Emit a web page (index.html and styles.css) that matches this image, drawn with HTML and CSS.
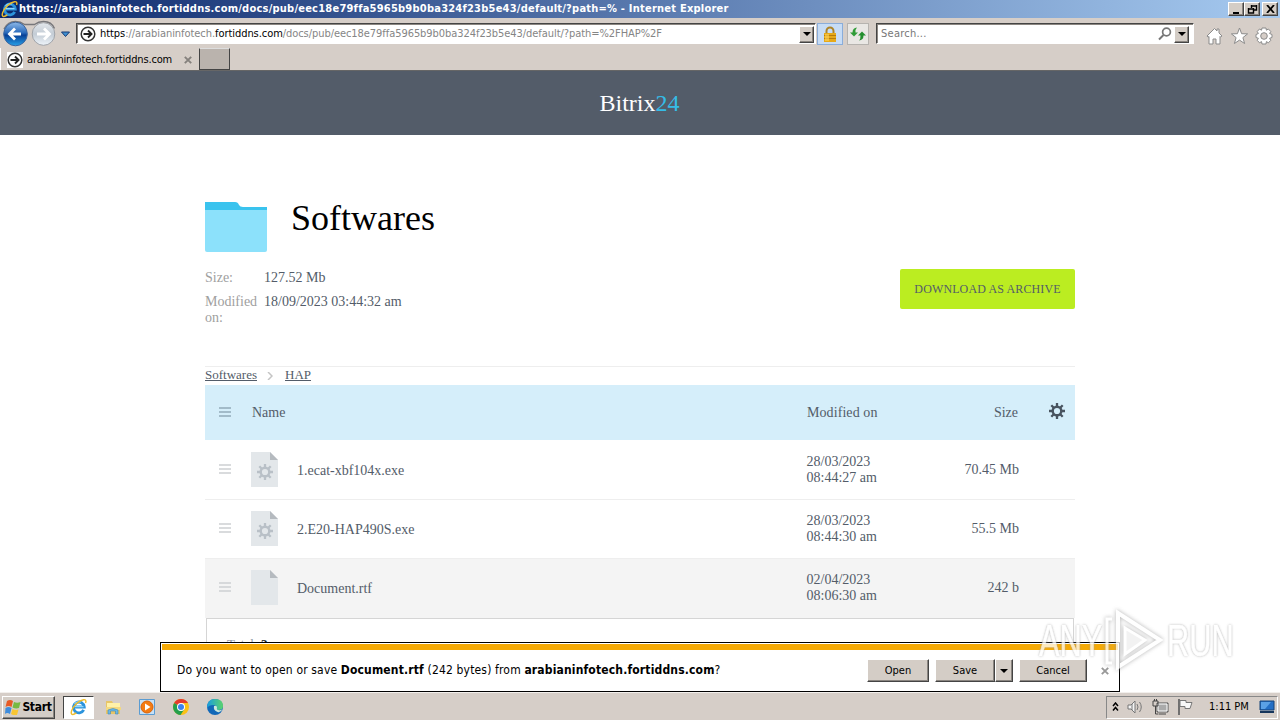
FILE: index.html
```html
<!DOCTYPE html>
<html lang="en">
<head>
<meta charset="utf-8">
<title>Bitrix24 - Internet Explorer</title>
<link rel="stylesheet" href="styles.css">
</head>
<body>
<svg class="defs" width="0" height="0">
  <defs>
    <symbol id="ie" viewBox="0 0 20 20">
      <path d="M15.2 13.2A6 6 0 1 1 15.8 10H5" fill="none" stroke="#2b93dc" stroke-width="3.2"/>
      <path d="M5 9.6h10M5 6.500a6 6 0 0 1 7-1.800" fill="none" stroke="#8fd7fb" stroke-width="1.200"/>
      <path d="M17.300 5.500C19.500 0 12.500 1 7 6.500C2 11.500-.5 18 3 18.300c1.500.1 3-1 4-1.800" fill="none" stroke="#eebc2d" stroke-width="1.600"/>
    </symbol>
    <symbol id="go" viewBox="0 0 16 16">
      <rect width="16" height="16" fill="#fff"/>
      <circle cx="8" cy="8" r="6.800" fill="none" stroke="#333" stroke-width="1.500"/>
      <path d="M3.500 8h8M8 4.500L11.500 8 8 11.500" fill="none" stroke="#222" stroke-width="1.900"/>
    </symbol>
    <symbol id="gear" viewBox="0 0 16 16">
      <circle cx="8" cy="8" r="4.300" fill="none" stroke="currentColor" stroke-width="2.400"/>
      <path d="M8 0v3M8 13v3M0 8h3M13 8h3M2.300 2.300l2.200 2.200M11.500 11.500l2.200 2.200M2.300 13.700l2.200-2.200M11.500 4.500l2.200-2.200" stroke="currentColor" stroke-width="2.300"/>
    </symbol>
    <symbol id="file" viewBox="0 0 27 35">
      <path d="M0 0h19l8 8v27H0z" fill="#e3e7ea"/>
      <path d="M19 0l8 8h-8z" fill="#b5babf"/>
    </symbol>
    <symbol id="bars" viewBox="0 0 12 10">
      <path d="M0 1h12M0 5h12M0 9h12" stroke="currentColor" stroke-width="1.500"/>
    </symbol>
    <symbol id="down" viewBox="0 0 8 4"><path d="M0 0h8L4 4z" fill="#000"/></symbol>
    <symbol id="close" viewBox="0 0 8 8"><path d="M.8.8l6.400 6.400M7.200.8L.8 7.200" stroke="currentColor" stroke-width="1.900"/></symbol>
  </defs>
</svg>
<div class="screen">
  <div class="titlebar">
    <svg class="title-icon"><use href="#ie"/></svg>
    <span class="title-text">https://arabianinfotech.fortiddns.com/docs/pub/eec18e79ffa5965b9b0ba324f23b5e43/default/?path=% - Internet Explorer</span>
    <div class="win-buttons">
      <span class="btn win"><svg width="11" height="9"><path d="M2 8h6" stroke="#000" stroke-width="2"/></svg></span>
      <span class="btn win"><svg width="11" height="10"><path d="M4 2h6M9.500 1v5H7M4.500 1v3M1 5h6M1.500 4v5h5V4" fill="none" stroke="#000" stroke-width="1.400"/></svg></span>
      <span class="btn win gap"><svg width="9" height="8"><path d="M1 0l7 8M8 0L1 8" stroke="#000" stroke-width="1.800"/></svg></span>
    </div>
  </div>
  <div class="toolbar">
    <svg class="nav" viewBox="0 0 74 28">
      <defs>
        <linearGradient id="blue" x2="0" y2="1"><stop offset="0" stop-color="#8eb9e8"/><stop offset=".45" stop-color="#2869bb"/><stop offset=".55" stop-color="#073f96"/><stop offset="1" stop-color="#29a2e9"/></linearGradient>
        <linearGradient id="pale" x2="0" y2="1"><stop offset="0" stop-color="#e4e8ec"/><stop offset=".5" stop-color="#c3ccd5"/><stop offset="1" stop-color="#eef4fa"/></linearGradient>
      </defs>
      <path d="M4 9Q8 1.500 15.500 1.500q5 0 9 3h10q4-3 9-3 8 0 11 7" fill="none" stroke="#77777b" stroke-width="1.500"/>
      <circle cx="15.500" cy="14" r="11.800" fill="url(#blue)" stroke="#39649f"/>
      <path d="M21 14H11M15 8.500L9.500 14l5.500 5.500" fill="none" stroke="#fff" stroke-width="2.800"/>
      <circle cx="43.500" cy="14" r="11.300" fill="url(#pale)" stroke="#a0a4aa"/>
      <path d="M37 14h11M44 8.500l5.500 5.500-5.500 5.500" fill="none" stroke="#fff" stroke-width="2.800"/>
      <path d="M61.500 12h8l-4 4.500z" fill="#3f8fd0" stroke="#183b75"/>
    </svg>
    <div class="field address">
      <svg class="go"><use href="#go"/></svg>
      <span class="url"><b>https</b>://arabianinfotech.<b>fortiddns.com</b>/docs/pub/eec18e79ffa5965b9b0ba324f23b5e43/default/?path=%2FHAP%2F</span>
      <span class="btn drop"><svg width="8" height="4"><use href="#down"/></svg></span>
    </div>
    <div class="lock"><svg width="14" height="16"><path d="M3.500 8V5a3.500 3.500 0 0 1 7 0v3" fill="none" stroke="#ad8429" stroke-width="2"/><path d="M1 7h12v9H1z" fill="#e7a918"/><path d="M1 9.500h12M1 12.500h12" stroke="#b77c0b"/><path d="M2 8h4v7H2z" fill="#ffd65c" opacity=".6"/></svg></div>
    <div class="refresh"><svg width="16" height="14"><path d="M0 5l4-4.500V4h3v2H5.500L8 6 4 10z" fill="none"/><path d="M0 5.500h2.500Q2.500 1 7 .5 5.300 2 5.500 5.500H8L4 9.500z" fill="#2f9c37"/><path d="M8 8.500l4-4 4 4h-2.500Q13.500 13 9 13.500q1.700-1.500 1.500-5z" fill="#248f2f"/></svg></div>
    <div class="field search">
      <span class="placeholder">Search...</span>
      <svg width="14" height="14"><circle cx="8.500" cy="5" r="3.900" fill="none" stroke="#777" stroke-width="1.700"/><path d="M5.500 8L1 12.500" stroke="#777" stroke-width="2"/></svg>
      <span class="btn drop"><svg width="8" height="4"><use href="#down"/></svg></span>
    </div>
    <svg class="commands" viewBox="0 0 68 18">
      <g fill="#fff" stroke="#8b8b8b" stroke-width="1"><path d="M1 9l7.500-7.500L11 4V2h2v4l3 3-1.500 1-.5-.5V17h-4v-5H7v5H3V9.500l-1 .7z"/><path d="M33.500 1l2.100 5.700 6 .2-4.700 3.700 1.700 5.900-5.100-3.400-5.100 3.400 1.700-5.900L25.400 6.900l6-.2z"/>
      <path d="M56 1h4l.4 2.200 2-1.200 2.400 2.500-1.200 2L66 7.500v3l-2.400.8 1.200 2-2.400 2.500-2-1.200L60 17h-4l-.5-2.400-2 1.200-2.300-2.500 1.200-2L50 10.500v-3l2.400-1-1.200-2L53.500 2l2 1.200z"/><circle cx="58" cy="9" r="3.300" fill="#d6cec8"/></g>
    </svg>
  </div>
  <div class="tabs">
    <div class="tab"><svg class="go"><use href="#go"/></svg><span class="tab-text">arabianinfotech.fortiddns.com</span><svg class="tab-close"><use href="#close"/></svg></div>
    <div class="new-tab"></div>
  </div>

  <main class="page">
    <header class="brand">Bitrix<span>24</span></header>
    <div class="content">
      <div class="heading">
        <svg width="62" height="50"><path d="M0 0h30q3 0 4 3 1 2 4 2h24v10H0z" fill="#3ac3ee"/><path d="M0 8h62v40q0 2-2 2H2q-2 0-2-2z" fill="#8ce1fb"/></svg>
        <h1>Softwares</h1>
      </div>
      <div class="info">
        <dl><dt>Size:</dt><dd>127.52 Mb</dd><dt>Modified on:</dt><dd>18/09/2023 03:44:32 am</dd></dl>
        <a class="download"><span>DOWNLOAD AS ARCHIVE</span></a>
      </div>
      <nav class="crumbs"><a>Softwares</a><svg width="6" height="8"><path d="M1 0l4 4-4 4" fill="none" stroke="#c4c4c4" stroke-width="1.500"/></svg><a>HAP</a></nav>
      <div class="row head"><svg class="bars"><use href="#bars"/></svg><span class="name">Name</span><span class="date">Modified on</span><span class="size">Size</span><svg class="settings"><use href="#gear"/></svg></div>
      <div class="row"><svg class="bars"><use href="#bars"/></svg><span class="doc"><svg class="file"><use href="#file"/></svg><svg class="cog"><use href="#gear"/></svg></span><span class="name">1.ecat-xbf104x.exe</span><span class="date">28/03/2023<br>08:44:27 am</span><span class="size">70.45 Mb</span></div>
      <div class="row ruled"><svg class="bars"><use href="#bars"/></svg><span class="doc"><svg class="file"><use href="#file"/></svg><svg class="cog"><use href="#gear"/></svg></span><span class="name">2.E20-HAP490S.exe</span><span class="date">28/03/2023<br>08:44:30 am</span><span class="size">55.5 Mb</span></div>
      <div class="row ruled selected"><svg class="bars"><use href="#bars"/></svg><span class="doc"><svg class="file"><use href="#file"/></svg></span><span class="name">Document.rtf</span><span class="date">02/04/2023<br>08:06:30 am</span><span class="size">242 b</span></div>
      <div class="total">Total: <b>3</b></div>
    </div>
    <div class="notice">
      <span class="question">Do you want to open or save <b>Document.rtf</b> (242 bytes) from <b>arabianinfotech.fortiddns.com</b>?</span>
      <span class="btn open">Open</span>
      <span class="btn save">Save</span><span class="btn arrow"><svg width="8" height="4"><use href="#down"/></svg></span>
      <span class="btn cancel">Cancel</span>
      <svg class="dismiss"><use href="#close"/></svg>
    </div>
    <div class="watermark"><span class="any">ANY</span><svg viewBox="0 0 60 64"><path d="M8 10H3v44h5" fill="none" stroke="#fff" stroke-width="3"/><path d="M14 4L56 31 14 58z" fill="none" stroke="#fff" stroke-width="4"/><path d="M21 19l20 12-20 14z" fill="#eee" stroke="#fff" stroke-width="3"/></svg><span class="run">RUN</span></div>
  </main>

  <footer class="taskbar">
    <div class="btn start"><svg width="16" height="16" viewBox="0 0 16 16"><path d="M2 2q3-2 6 0L6.500 8q-3-2-6 0z" fill="#e75a25"/><path d="M9 3q3 1.500 6.500 0L14 9q-3 1-6.500-.5z" fill="#77b943"/><path d="M.5 9q3-2 6 0L5 15q-3-2-5 0z" fill="#3f8cdc"/><path d="M7.500 10q3 1.500 6 .5L12 16q-3 1-6-1z" fill="#f9c633"/></svg><b>Start</b></div>
    <div class="task active"><svg width="18" height="18"><use href="#ie"/></svg></div>
    <div class="task"><svg width="18" height="18"><path d="M2 3h6l1 2h7v11H2z" fill="#e7c567"/><path d="M3 5h13v4H3z" fill="#fff1a8"/><path d="M2 9h15v3H2z" fill="#f3d980"/><path d="M4 16v-4q5-3 10 0v4h-2.500v-3h-5v3z" fill="#6bb8e5" stroke="#4288b5" stroke-width=".6"/></svg></div>
    <div class="task"><svg width="18" height="18"><path d="M1.500 1.500h15v15h-15z" fill="#c7e1f7" stroke="#5b9cd2"/><circle cx="9" cy="9" r="6" fill="#f47b13" stroke="#d96208"/><path d="M7 5.500L12.500 9 7 12.500z" fill="#fff"/></svg></div>
    <div class="task"><svg width="18" height="18"><circle cx="9" cy="9" r="8" fill="#fbc116"/><path d="M9 9L2.100 5A8 8 0 0 1 16 5H9z" fill="#e33b2e"/><path d="M2.100 5A8 8 0 0 0 8.500 17L12.500 11 9 9z" fill="#259f4c"/><circle cx="9" cy="9" r="4" fill="#fff"/><circle cx="9" cy="9" r="3" fill="#3c82ef"/></svg></div>
    <div class="task"><svg width="18" height="18"><defs><linearGradient id="edge"><stop offset="0" stop-color="#189de0"/><stop offset="1" stop-color="#5cd46b"/></linearGradient></defs><circle cx="9" cy="9" r="8" fill="#1268b8"/><path d="M1 10Q1 1 9 1t8 7q0 4-4.500 4Q9 12 10 9.500 11 7 7 7T1 10z" fill="url(#edge)"/><path d="M11 9.500q-1 3 3 2.700 2-.2 2.600-1.200-2 4-5 3Q7 12.500 8 8q3-1 3 1.500z" fill="#cde7dc"/></svg></div>
    <div class="tray">
      <svg width="7" height="10"><path d="M1 4l2.500-3L6 4M1 8.500l2.500-3 2.500 3" fill="none" stroke="#000" stroke-width="1.500"/></svg>
      <svg width="17" height="16"><path d="M1 6h3l4-4v12l-4-4H1z" fill="#f4f4f4" stroke="#777"/><path d="M10 5q2 3 0 6M12.500 3q3.500 5 0 10M5 5v6" fill="none" stroke="#777"/></svg>
      <svg width="17" height="16"><path d="M5 4h11v9H5z" fill="#aaa" stroke="#555"/><path d="M6 5h9v7H6z" fill="none" stroke="#fff"/><path d="M7 15h7M1 2h5v5H1zM3.500 7v8h3M2.500 0v2M4.500 0v2" fill="none" stroke="#444"/></svg>
      <svg width="17" height="16"><path d="M2 0v16" stroke="#666" stroke-width="1.800"/><path d="M3 1.500h6v2h6l-2 6H8v-2H3z" fill="#f7f7f7" stroke="#777"/></svg>
      <span class="clock">1:11 PM</span>
      <svg width="16" height="14"><path d="M1 1h14v9H1z" fill="#246fc5" stroke="#174579"/><path d="M2 2h10L6 9H2z" fill="#5ba1e5"/><path d="M1 12h14" stroke="#17365c" stroke-width="2"/></svg>
    </div>
  </footer>
</div>
</body>
</html>
```
FILE: styles.css
```css
* { box-sizing: border-box; }
body { margin: 0; overflow: hidden; }
svg { display: block; flex: none; }
.defs { position: absolute; }
.screen { width: 1280px; height: 720px; display: flex; flex-direction: column; background: #d6cec8; font: 11px/14px "DejaVu Sans Condensed", "DejaVu Sans", sans-serif; font-stretch: condensed; color: #000; white-space: nowrap; }
.btn { display: flex; align-items: center; justify-content: center; background: #d4cdc6; border: 1px solid; border-color: #fff #444 #444 #fff; box-shadow: inset -1px -1px #8a8580; }
.titlebar { height: 18px; display: flex; align-items: center; background: linear-gradient(90deg, #0b276b, #a6caf0); padding-right: 2px; }
.title-icon { width: 18px; height: 18px; margin: 0 0 0 1px; }
.title-text { color: #fff; font-weight: bold; width: 1207px; letter-spacing: .23px; }
.win-buttons { display: flex; margin-left: auto; }
.win { width: 16px; height: 14px; }
.gap { margin-left: 2px; }
.toolbar { height: 30px; display: flex; align-items: center; padding-top: 1px; }
.nav { width: 74px; height: 28px; margin-right: 2px; }
.field { display: flex; align-items: center; background: #fff; border: 1px solid; border-color: #444 #fff #fff #444; box-shadow: inset 1px 1px #8b8681; height: 21px; }
.address { width: 740px; padding: 1px 1px 0 3px; }
.go { width: 16px; height: 16px; }
.url { color: #858585; margin-left: 4px; flex: 1; letter-spacing: -.06px; }
.url b { color: #000; font-weight: normal; }
.drop { width: 15px; height: 17px; }
.lock, .refresh { height: 22px; display: flex; align-items: center; justify-content: center; border: 1px solid #8aadda; background: #c7dcf5; width: 26px; margin-left: 1px; }
.refresh { width: 22px; margin-left: 4px; border-color: #b6b3af; background: #e9e7e4; }
.search { width: 318px; margin-left: 7px; padding: 1px 4px 0; }
.placeholder { color: #777; flex: 1; letter-spacing: .25px; }
.search .drop { margin-left: 2px; }
.commands { width: 68px; height: 18px; margin: 4px 0 0 12px; }
.tabs { height: 23px; display: flex; border-bottom: 1px solid #666; }
.tab { width: 199px; display: flex; align-items: center; padding: 2px 7px 0 6px; border-left: 1px solid #fff; }
.tab-text { width: 148px; margin-left: 4px; letter-spacing: -.15px; }
.tab-close { width: 8px; height: 8px; color: #85817d; margin-left: auto; }
.new-tab { width: 31px; height: 22px; background: #bab3ad; border: 1px solid #444; border-top-color: #ddd; }
.page { height: 621px; position: relative; background: #fff; overflow: hidden; font: 14px/16px "Liberation Serif", serif; color: #535c69; }
.brand { height: 64px; background: #535c69; color: #fff; font-size: 24px; line-height: 64px; text-align: center; padding-right: 1px; }
.brand span { color: #35bce7; }
.content { width: 870px; margin: 0 auto; }
.heading { display: flex; padding-top: 67px; height: 134px; }
h1 { margin: -6px 0 0 24px; font-size: 36px; line-height: 44px; font-weight: normal; color: #000; }
.info { display: flex; justify-content: space-between; height: 97px; }
dl { margin: 0; padding-top: 1px; display: grid; grid-template-columns: 52px 160px; column-gap: 7px; row-gap: 8px; align-content: start; }
dt { color: #a0a0a0; white-space: normal; }
dd { margin: 0; }
.download { width: 175px; height: 40px; border-radius: 2px; background: #bbed21; font-size: 12px; line-height: 40px; text-align: center; letter-spacing: .12px; }
.crumbs { height: 19px; border-top: 1px solid #eee; display: flex; align-items: center; font-size: 13px; line-height: 16px; padding-bottom: 2px; }
.crumbs svg { margin: 1px 12px 0 10px; }
.crumbs a { text-decoration: underline; }
.row { height: 59px; display: flex; align-items: center; padding-left: 14px; }
.ruled { box-shadow: inset 0 1px #eee; }
.row.head { height: 55px; background: #d5eefa; }
.bars { width: 12px; height: 10px; color: #cdd0d2; margin-bottom: 1px; }
.head .bars { color: #91abb9; }
.doc { display: grid; place-items: center; width: 27px; height: 35px; margin-left: 20px; }
.doc svg { grid-area: 1 / 1; }
.file { width: 27px; height: 35px; }
.cog { width: 16px; height: 16px; color: #b9c0c7; margin-top: 5px; }
.name { width: 509.500px; margin-left: 19px; padding-top: 2px; }
.head .name { width: 555px; margin-left: 21px; padding-top: 1px; }
.date { width: 112.500px; padding-top: 1px; }
.head .date { width: 112px; letter-spacing: .08px; }
.size { width: 100px; text-align: right; padding-top: 1px; }
.head .size { width: 99px; }
.settings { width: 16px; height: 16px; color: #48535f; margin-left: 31px; margin-bottom: 3px; }
.selected { height: 60px; padding-bottom: 1px; background: #f4f4f4; }
.total { margin: 0 1px; height: 80px; padding: 17px 20px; border: 1px solid #d5d5d5; font-size: 13px; letter-spacing: .1px; color: #8d94a0; }
.total b { color: #222; }
.notice { position: absolute; left: 160px; top: 571px; width: 960px; height: 50px; display: flex; align-items: center; background: #fff; border: 1px solid #000; padding: 6px 0 0 16px; font: 12px/16px "DejaVu Sans Condensed", "DejaVu Sans", sans-serif; color: #000; }
.notice::before { content: ""; position: absolute; left: 1px; right: 1px; top: 1px; height: 6px; background: #f5aa06; }
.question { width: 690px; letter-spacing: .16px; }
.notice .btn { height: 23px; font-size: 11px; padding-top: 2px; }
.open { width: 62px; }
.save { width: 60px; margin-left: 6px; }
.arrow { width: 18px; }
.cancel { width: 68px; margin-left: 6px; }
.dismiss { width: 8px; height: 8px; color: #999; margin-left: 14px; margin-top: 2px; }
.watermark { position: absolute; left: 1039px; top: 537px; width: 195px; height: 66px; display: flex; align-items: center; color: #fff; font: 44px/60px "Liberation Sans", sans-serif; text-shadow: 0 0 3px #999, 0 0 2px #bbb; opacity: .75; }
.watermark svg { width: 60px; height: 64px; filter: drop-shadow(0 0 2px #999); }
.watermark span { display: block; transform: scaleX(.7); transform-origin: left; -webkit-text-stroke: .6px #fff; }
.any { width: 65px; }
.run { width: 66px; margin-left: 3px; }
.taskbar { flex: 1; display: flex; align-items: center; padding: 1px 2px 0; border-top: 1px solid #f2efec; }
.start { width: 53px; height: 23px; gap: 1px; font-size: 12px; letter-spacing: -.3px; }
.task { width: 31px; height: 23px; display: flex; align-items: center; justify-content: center; margin-right: 3px; }
.task.active { background: #fff; border: 1px solid #444; border-right-color: #fff; border-bottom-color: #fff; margin-left: 8px; }
.tray { width: 172px; height: 23px; margin-left: auto; display: flex; align-items: center; border: 1px solid #888; border-right-color: #fff; border-bottom-color: #fff; padding: 0 2px 0 5px; gap: 8px; }
.clock { margin-left: 7px; flex: 1; }
```
